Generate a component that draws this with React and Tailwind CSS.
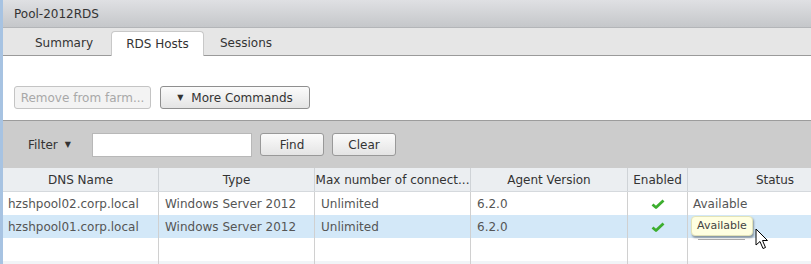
import React from 'react';

const cols = ['w-[156px] shrink-0', 'w-[156px] shrink-0', 'w-[156px] shrink-0', 'w-[157px] shrink-0', 'w-[60px] shrink-0', 'w-[175px] shrink-0'];

const rows = [
  { dns: 'hzshpool02.corp.local', type: 'Windows Server 2012', max: 'Unlimited', ver: '6.2.0', status: 'Available' },
  { dns: 'hzshpool01.corp.local', type: 'Windows Server 2012', max: 'Unlimited', ver: '6.2.0', status: '', selected: true },
];

function Check() {
  return (
    <svg width="14" height="12" viewBox="0 0 14 12">
      <path d="M1.5 6.5 L5 9.5 L12.5 2.5" fill="none" stroke="#3cae2e" strokeWidth="2.8" strokeLinejoin="round" />
    </svg>
  );
}

function Cursor() {
  return (
    <svg width="14" height="22" viewBox="0 0 14 22">
      <path d="M1 1 L1 17 L5 13.5 L8 20.5 L10.5 19.5 L7.5 12.5 L12.5 12.5 Z" fill="#fff" stroke="#000" strokeWidth="1" strokeLinejoin="round" />
    </svg>
  );
}

function Btn({ children, className = '', disabled }) {
  return (
    <div
      className={`flex items-center justify-center h-[23px] rounded-[3px] border ${
        disabled ? 'border-[#c4c4c4] text-[#a8a8a8] bg-[#f3f3f3]' : 'border-[#8f8f8f] text-[#333] bg-gradient-to-b from-[#fbfbfb] to-[#e4e4e4]'
      } ${className}`}
    >
      {children}
    </div>
  );
}

export default function App() {
  return (
    <div className="flex w-[811px] h-[264px] overflow-hidden bg-white text-[12px] text-[#333]" style={{ fontFamily: '"DejaVu Sans", Verdana, sans-serif' }}>
      <div className="w-[3px] shrink-0 bg-[#a7c3e2]" />
      <div className="flex-1 flex flex-col overflow-hidden">
        <div className="h-[28px] flex items-center pl-[11px] bg-gradient-to-b from-[#dfe0e3] to-[#c5c7ca] border-b border-[#b3b5b8]">
          Pool-2012RDS
        </div>
        <div className="h-[28px] flex items-end bg-[#e6e6e6] border-b border-[#9a9a9a] pl-[14px]">
          <div className="w-[94px] h-[25px] flex items-center justify-center text-[#333]">Summary</div>
          <div className="w-[93px] h-[25px] -mb-px flex items-center justify-center bg-white border border-b-0 border-[#c8c8c8] rounded-t-[4px]">
            RDS Hosts
          </div>
          <div className="w-[84px] h-[25px] flex items-center justify-center">Sessions</div>
        </div>
        <div className="h-[65px] flex items-end gap-[9px] pl-[11px] pb-[11px] border-b border-[#9c9c9c]">
          <Btn disabled className="w-[137px]">Remove from farm...</Btn>
          <Btn className="w-[150px] gap-[8px]">
            <span className="text-[8px]">▼</span>
            <span>More Commands</span>
          </Btn>
        </div>
        <div className="h-[47px] flex items-center bg-[#cccccc] pl-[25px]">
          <span className="flex items-center gap-[7px] w-[64px]">
            Filter <span className="text-[8px]">▼</span>
          </span>
          <div className="w-[160px] h-[24px] bg-white border border-[#b8b8b8]" />
          <Btn className="w-[64px] ml-[8px] border-[#999]">Find</Btn>
          <Btn className="w-[64px] ml-[8px] border-[#999]">Clear</Btn>
        </div>
        <div className="flex h-[24px] bg-[#ebeef1] border-b border-[#d5d9dd]">
          {['DNS Name', 'Type', 'Max number of connect...', 'Agent Version', 'Enabled', 'Status'].map((h, i) => (
            <div key={h} className={`${cols[i]} flex items-center justify-center border-r border-[#cfd3d7] whitespace-nowrap overflow-hidden`}>
              {h}
            </div>
          ))}
        </div>
        {rows.map((r, ri) => (
          <div key={ri} className={`flex h-[23px] text-[#555] ${r.selected ? 'bg-[#d3e8f8]' : 'bg-white'}`}>
            <div className={`${cols[0]} flex items-center pl-[5px] border-r border-[#d0d0d0]`}>{r.dns}</div>
            <div className={`${cols[1]} flex items-center pl-[6px] border-r border-[#d0d0d0]`}>{r.type}</div>
            <div className={`${cols[2]} flex items-center pl-[6px] border-r border-[#d0d0d0]`}>{r.max}</div>
            <div className={`${cols[3]} flex items-center pl-[6px] border-r border-[#d0d0d0]`}>{r.ver}</div>
            <div className={`${cols[4]} flex items-center justify-center border-r border-[#d0d0d0]`}>
              <Check />
            </div>
            <div className={`${cols[5]} relative flex items-center pl-[5px]`}>
              {r.status}
              {r.selected && (
                <>
                  <div className="absolute left-[3px] top-[1px] flex flex-col items-center">
                    <div className="h-[20px] px-[5px] flex items-center rounded-[4px] bg-[#ffffe1] border border-[#e3e3b8] shadow-[1px_2px_2px_rgba(0,0,0,0.35)] text-[11px] text-[#444]">
                      Available
                    </div>
                    <div className="mt-[3px] w-[47px] h-px bg-[#aaa]" />
                  </div>
                  <div className="absolute left-[67px] top-[13px]">
                    <Cursor />
                  </div>
                </>
              )}
            </div>
          </div>
        ))}
        <div className="flex h-[23px] bg-white">
          {cols.map((c, i) => (
            <div key={i} className={`${c} ${i < 5 ? 'border-r border-[#d0d0d0]' : ''}`} />
          ))}
        </div>
        <div className="flex flex-1 bg-[#f1f4f7]">
          {cols.map((c, i) => (
            <div key={i} className={`${c} ${i < 5 ? 'border-r border-[#d0d0d0]' : ''}`} />
          ))}
        </div>
      </div>
    </div>
  );
}
